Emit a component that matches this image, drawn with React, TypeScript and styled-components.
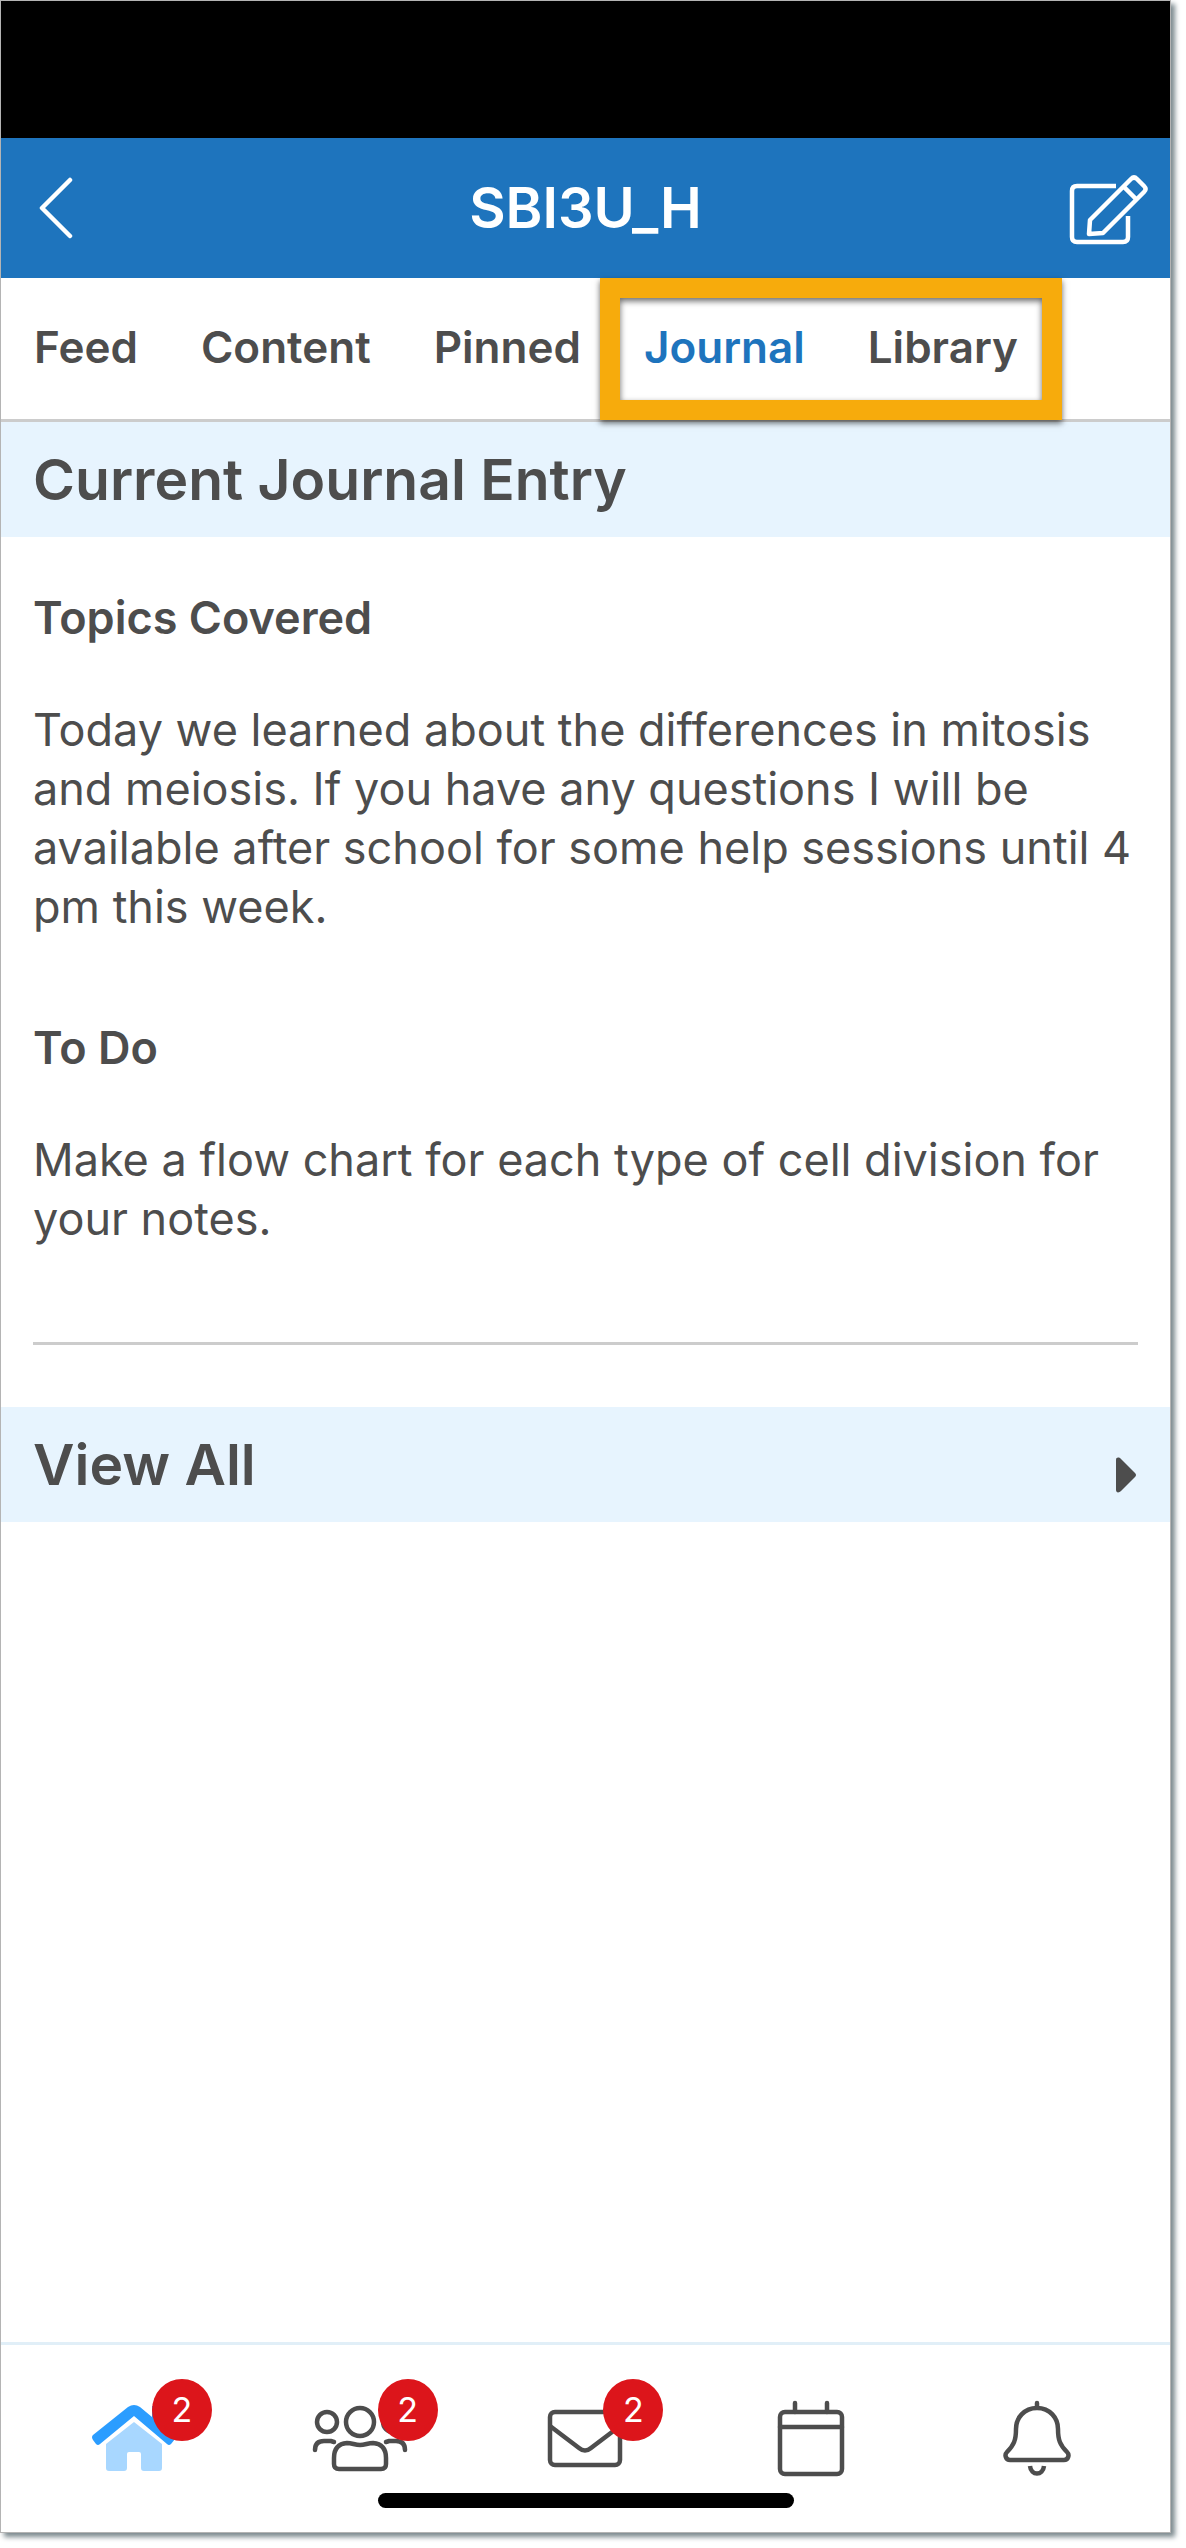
import React from 'react';
import styled, { createGlobalStyle } from 'styled-components';

const GlobalStyle = createGlobalStyle`
  *, *::before, *::after { box-sizing: border-box; }
  body {
    margin: 0;
    background: #fff;
    color: #4d4d4d;
    font-family: Inter, Roboto, "Liberation Sans", sans-serif;
  }
`;

const Screen = styled.div`
  display: flex;
  flex-direction: column;
  min-height: calc(100vh - 15px);
  margin: 0 15px 15px 0;
  border: 1px solid #b4b4b4;
  background: #fff;
  box-shadow: 4px 4px 5px #7d8a8f;
`;

const StatusBar = styled.div`
  height: 137px;
  background: #000;
`;

const Header = styled.header`
  display: grid;
  grid-template-columns: 120px 1fr 120px;
  align-items: center;
  height: 140px;
  background: #1e74bd;
`;

const Title = styled.h1`
  margin: 0;
  color: #fff;
  text-align: center;
  font-size: 56px;
  line-height: 68px;
  font-weight: 600;
`;

const IconButton = styled.button<{ $end?: boolean }>`
  display: flex;
  justify-content: ${(p) => (p.$end ? 'flex-end' : 'flex-start')};
  align-items: center;
  height: 100px;
  padding: ${(p) => (p.$end ? '0 22px 0 0' : '0 0 0 36px')};
  border: 0;
  background: none;
  color: #fff;

  & > svg { flex-shrink: 0; }
`;

const Tabs = styled.nav`
  display: flex;
  align-items: center;
  height: 144px;
  padding: 0 0 3px 33px;
  border-bottom: 3px solid #ccc;
`;

const Tab = styled.a<{ $active?: boolean }>`
  margin-right: 63px;
  color: ${(p) => (p.$active ? '#1e74bd' : '#4d4d4d')};
  font-size: 44px;
  line-height: 56px;
  font-weight: 600;
  text-decoration: none;
`;

const Highlighted = styled.div`
  position: relative;
  display: flex;

  & > a:last-child { margin-right: 0; }

  &::after {
    content: "";
    position: absolute;
    inset: -41px -44px -45px;
    border: 20px solid #f7ab0c;
    box-shadow: 0 3px 6px rgba(0, 0, 0, 0.6), inset 0 3px 6px rgba(0, 0, 0, 0.6);
    pointer-events: none;
  }
`;

const Main = styled.main`
  flex: 1;
`;

const Band = styled.div`
  display: flex;
  justify-content: space-between;
  align-items: center;
  height: 115px;
  padding: 0 34px 0 32px;
  background: #e7f4fe;
  color: #4d4d4d;
`;

const BandTitle = styled.h2`
  margin: 0;
  font-size: 57px;
  line-height: 68px;
  font-weight: 600;
`;

const BandLink = styled(Band).attrs({ as: 'a' })<{ href?: string }>`
  text-decoration: none;
`;

const Entry = styled.article`
  margin: 0 32px 62px;
  padding: 51px 0 94px;
  border-bottom: 3px solid #ccc;
`;

const EntryTitle = styled.h3`
  margin: 0 0 53px;
  font-size: 45px;
  line-height: 59px;
  font-weight: 600;

  p + & { margin-top: 82px; }
`;

const EntryText = styled.p`
  margin: 0;
  font-size: 45px;
  line-height: 59px;
`;

const BottomNav = styled.nav`
  display: grid;
  grid-template-columns: repeat(5, 1fr);
  padding: 48px 20px 0;
  border-top: 3px solid #e1eff8;
`;

const NavItem = styled.a`
  display: flex;
  justify-content: center;
  color: #4d4d4d;
`;

const IconBox = styled.span`
  position: relative;
  display: flex;
`;

const Badge = styled.span`
  position: absolute;
  top: -14px;
  left: calc(50% + 18px);
  width: 60px;
  height: 62px;
  border-radius: 50%;
  background: #dc151b;
  color: #fff;
  text-align: center;
  font-size: 34px;
  line-height: 62px;
`;

const HomeIndicator = styled.div`
  width: 416px;
  height: 15px;
  margin: 16px auto 24px;
  border-radius: 8px;
  background: #000;
`;

const BackIcon = () => (
  <svg width="36" height="64" viewBox="0 0 36 64" fill="none" stroke="currentColor" strokeWidth="4.5" strokeLinecap="round" strokeLinejoin="round">
    <path d="M33 4 5 32 33 60" />
  </svg>
);

const ComposeIcon = () => (
  <svg width="80" height="76" viewBox="0 0 80 76" fill="none" stroke="currentColor" strokeWidth="4.5" strokeLinecap="round" strokeLinejoin="round">
    <path strokeLinecap="butt" d="M48 16H9Q4 16 4 21V67Q4 72 9 72H55Q60 72 60 67V46" />
    <path d="M22 50 63 9Q66 6 69 9L76 16Q79 19 76 22L35 63 21 64Z" />
    <path d="M56 17 68 29" />
  </svg>
);

const ArrowIcon = () => (
  <svg width="20" height="56" viewBox="0 -20 20 56" fill="currentColor">
    <path d="M0 3C0 0 3 0 5 2L19 16Q21 18 19 20L5 34C3 36 0 36 0 33Z" />
  </svg>
);

const HomeIcon = () => (
  <svg width="84" height="84" viewBox="0 0 84 84">
    <path fill="#a8d7ff" d="M42 29 70 51V75Q70 78 67 78H52Q49 78 49 75V61Q49 59 47 59H37Q35 59 35 61V75Q35 78 32 78H17Q14 78 14 75V51Z" />
    <path fill="#2b9dff" d="M36 14Q42 10 48 14L60 24V13H70V32L82 42Q84 44 83 46L79 51Q77 53 75 51L42 23 8 51Q6 53 4 51L1 47Q-1 44 1 42Z" />
  </svg>
);

const PeopleIcon = () => (
  <svg width="96" height="84" viewBox="-1 0 96 84" fill="none" stroke="currentColor" strokeWidth="4.5" strokeLinecap="round">
    <circle cx="47" cy="29" r="14" />
    <circle cx="14" cy="29" r="10" />
    <circle cx="80" cy="29" r="10" />
    <path d="M26 76Q21 76 21 71V65Q21 51 34 50C39 50 42 52 47 52S55 50 60 50Q73 51 73 65V71Q73 76 68 76Z" />
    <path d="M2 57Q2 48 11 48H18L21 49M92 57Q92 48 83 48H76L73 49" />
  </svg>
);

const MailIcon = () => (
  <svg width="76" height="84" viewBox="0 0 76 84" fill="none" stroke="currentColor" strokeWidth="4.5">
    <rect x="3" y="19" width="70" height="53" rx="5" />
    <path d="M3 33 32 55Q38 60 44 55L73 33" />
  </svg>
);

const CalendarIcon = () => (
  <svg width="68" height="84" viewBox="0 0 68 84" fill="none" stroke="currentColor" strokeWidth="4.5" strokeLinecap="round">
    <rect x="3" y="19" width="62" height="62" rx="5" />
    <path d="M3 34H65M18 10V19M50 10V19" />
  </svg>
);

const BellIcon = () => (
  <svg width="68" height="84" viewBox="0 0 68 84" fill="none" stroke="currentColor" strokeWidth="4.5" strokeLinecap="round">
    <path d="M34 10V15M34 15C21 15 13 25 13 36C13 47 11 52 4 59C1 62 3 67 7 67H61C65 67 67 62 64 59C57 52 55 47 55 36C55 25 47 15 34 15Z" />
    <path strokeLinecap="butt" d="M27 73C28 83 40 83 41 73" />
  </svg>
);

const navItems = [
  { label: 'Home', Icon: HomeIcon, count: 2 },
  { label: 'Groups', Icon: PeopleIcon, count: 2 },
  { label: 'Mail', Icon: MailIcon, count: 2 },
  { label: 'Calendar', Icon: CalendarIcon, count: 0 },
  { label: 'Notifications', Icon: BellIcon, count: 0 },
];

export default function App() {
  return (
    <>
      <GlobalStyle />
      <Screen>
        <StatusBar />
        <Header>
          <IconButton aria-label="Back"><BackIcon /></IconButton>
          <Title>SBI3U_H</Title>
          <IconButton $end aria-label="Compose"><ComposeIcon /></IconButton>
        </Header>
        <Tabs>
          <Tab href="#feed">Feed</Tab>
          <Tab href="#content">Content</Tab>
          <Tab href="#pinned">Pinned</Tab>
          <Highlighted>
            <Tab href="#journal" $active>Journal</Tab>
            <Tab href="#library">Library</Tab>
          </Highlighted>
        </Tabs>
        <Main>
          <Band><BandTitle>Current Journal Entry</BandTitle></Band>
          <Entry>
            <EntryTitle>Topics Covered</EntryTitle>
            <EntryText>
              Today we learned about the differences in mitosis and meiosis. If you have any
              questions I will be available after school for some help sessions until 4 pm this week.
            </EntryText>
            <EntryTitle>To Do</EntryTitle>
            <EntryText>Make a flow chart for each type of cell division for your notes.</EntryText>
          </Entry>
          <BandLink href="#all"><BandTitle>View All</BandTitle><ArrowIcon /></BandLink>
        </Main>
        <BottomNav>
          {navItems.map(({ label, Icon, count }) => (
            <NavItem key={label} href={`#${label.toLowerCase()}`} aria-label={label}>
              <IconBox>
                <Icon />
                {count > 0 && <Badge>{count}</Badge>}
              </IconBox>
            </NavItem>
          ))}
        </BottomNav>
        <HomeIndicator />
      </Screen>
    </>
  );
}
